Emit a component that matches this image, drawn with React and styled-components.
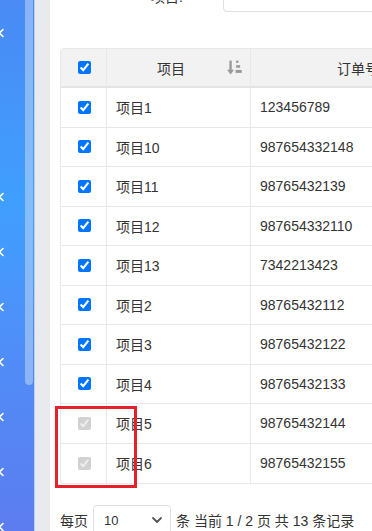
import React from "react";
import styled, { createGlobalStyle } from "styled-components";

const Global = createGlobalStyle`
  html, body { margin: 0; padding: 0; overflow: hidden; background: #fff; }
  body { font-family: "Liberation Sans", "Noto Sans CJK SC", sans-serif; color: #333; }
  * { box-sizing: border-box; }
`;

const Page = styled.div`
  position: relative;
  display: flex;
  width: 372px;
  height: 531px;
  overflow: hidden;
`;

const Sidebar = styled.div`
  position: relative;
  width: 34px;
  flex-shrink: 0;
  background: linear-gradient(180deg, #4a8af4 0%, #3f9fff 38%, #4f8ef8 65%, #5c7cef 100%);
  display: flex;
  flex-direction: column;
  padding-top: 5px;
  overflow: hidden;
`;

const Thumb = styled.div`
  position: absolute;
  left: 25px;
  top: -10px;
  width: 8px;
  height: 395px;
  border-radius: 4px;
  background: rgba(190, 215, 245, 0.55);
`;

const MenuItem = styled.div`
  height: ${p => p.$h || 55}px;
  flex-shrink: 0;
  display: flex;
  align-items: center;
  margin-left: -3px;
`;

const Gutter = styled.div`
  width: 16px;
  flex-shrink: 0;
  background: #e8eaee;
  border-left: 1px solid #b9cdf0;
`;

const Main = styled.div`
  flex: 1;
  min-width: 0;
  overflow: hidden;
  padding-left: 10px;
  display: flex;
  flex-direction: column;
`;

const FormRow = styled.div`
  margin-top: -20px;
  height: 32px;
  display: flex;
  align-items: center;
  flex-shrink: 0;
`;

const Label = styled.div`
  width: 163px;
  text-align: right;
  font-size: 14px;
  padding-right: 40px;
  flex-shrink: 0;
`;

const Input = styled.div`
  width: 220px;
  height: 32px;
  flex-shrink: 0;
  border: 1px solid #dcdfe6;
  border-radius: 4px;
`;

const Table = styled.div`
  margin-top: 36px;
  width: 405px;
  flex-shrink: 0;
  border: 1px solid #e8e8e8;
  border-radius: 4px;
  overflow: hidden;
`;

const HeadRow = styled.div`
  display: grid;
  grid-template-columns: 46px 144px 214px;
  height: 39px;
  background: #f2f2f2;
  border-bottom: 2px solid #e4e4e4;
`;

const Row = styled.div`
  display: grid;
  grid-template-columns: 46px 144px 214px;
  height: 39.5px;
  border-bottom: ${p => (p.$last ? "none" : "1px solid #e8e8e8")};
`;

const Cell = styled.div`
  display: flex;
  align-items: center;
  justify-content: ${p => p.$justify || "flex-start"};
  padding: 0 ${p => p.$pad ?? 9}px;
  font-size: 14px;
  color: #333;
  border-right: ${p => (p.$noBorder ? "none" : "1px solid #e8e8e8")};
  white-space: nowrap;
`;

const HeadTitle = styled.span`
  flex: 1;
  text-align: center;
`;

const Check = styled.input`
  margin: 3px 3px 3px 4px;
`;

const Footer = styled.div`
  margin-top: 21px;
  display: flex;
  align-items: center;
  gap: 5px;
  font-size: 14px;
  white-space: nowrap;
  flex-shrink: 0;
`;

const Select = styled.div`
  width: 78px;
  height: 30px;
  border: 1px solid #dcdfe6;
  border-radius: 4px;
  display: flex;
  align-items: center;
  justify-content: space-between;
  padding: 0 7px 0 10px;
  font-size: 13px;
  color: #333;
`;

const Annotation = styled.div`
  position: absolute;
  left: 55px;
  top: 406px;
  width: 82px;
  height: 82px;
  border: 3px solid #e5212b;
  pointer-events: none;
`;

const Chevron = () => (
  <svg width="8" height="10" viewBox="0 0 8 10">
    <path d="M6 1.5 L2.5 5 L6 8.5" fill="none" stroke="#fff" strokeWidth="1.6" strokeLinecap="round" strokeLinejoin="round" />
  </svg>
);

const SortIcon = () => (
  <svg width="15" height="17" viewBox="0 0 14 16">
    <rect x="2.2" y="1.5" width="2.2" height="9.5" fill="#999" />
    <path d="M0 10 H6.6 L3.3 14.5 Z" fill="#999" />
    <rect x="8.5" y="1.5" width="2.2" height="2.2" fill="#999" />
    <rect x="8.5" y="5.8" width="3.8" height="2.4" fill="#999" />
    <rect x="8" y="10.3" width="5.8" height="2.8" fill="#999" />
  </svg>
);

const SelectArrow = () => (
  <svg width="12" height="8" viewBox="0 0 12 8">
    <path d="M2 2 L6 6 L10 2" fill="none" stroke="#555" strokeWidth="1.8" strokeLinecap="round" strokeLinejoin="round" />
  </svg>
);

const rows = [
  ["项目1", "123456789"],
  ["项目10", "987654332148"],
  ["项目11", "98765432139"],
  ["项目12", "987654332110"],
  ["项目13", "7342213423"],
  ["项目2", "98765432112"],
  ["项目3", "98765432122"],
  ["项目4", "98765432133"],
  ["项目5", "98765432144", true],
  ["项目6", "98765432155", true],
];

export default function App() {
  return (
    <>
      <Global />
      <Page>
        <Sidebar>
          <MenuItem $h={55}><Chevron /></MenuItem>
          <MenuItem $h={109} />
          <MenuItem><Chevron /></MenuItem>
          <MenuItem><Chevron /></MenuItem>
          <MenuItem><Chevron /></MenuItem>
          <MenuItem><Chevron /></MenuItem>
          <MenuItem><Chevron /></MenuItem>
          <MenuItem><Chevron /></MenuItem>
          <MenuItem><Chevron /></MenuItem>
          <Thumb />
        </Sidebar>
        <Gutter />
        <Main>
          <FormRow>
            <Label>项目:</Label>
            <Input />
          </FormRow>
          <Table>
            <HeadRow>
              <Cell $justify="center" $pad={0}>
                <Check type="checkbox" defaultChecked />
              </Cell>
              <Cell $pad={8}>
                <HeadTitle>项目</HeadTitle>
                <SortIcon />
              </Cell>
              <Cell $justify="center" $noBorder>订单号</Cell>
            </HeadRow>
            {rows.map(([name, no, disabled], i) => (
              <Row key={name} $last={i === rows.length - 1}>
                <Cell $justify="center" $pad={0}>
                  <Check type="checkbox" defaultChecked disabled={!!disabled} />
                </Cell>
                <Cell>{name}</Cell>
                <Cell $noBorder>{no}</Cell>
              </Row>
            ))}
          </Table>
          <Footer>
            <span>每页</span>
            <Select>
              <span>10</span>
              <SelectArrow />
            </Select>
            <span>条 当前 1 / 2 页 共 13 条记录</span>
          </Footer>
        </Main>
        <Annotation />
      </Page>
    </>
  );
}
